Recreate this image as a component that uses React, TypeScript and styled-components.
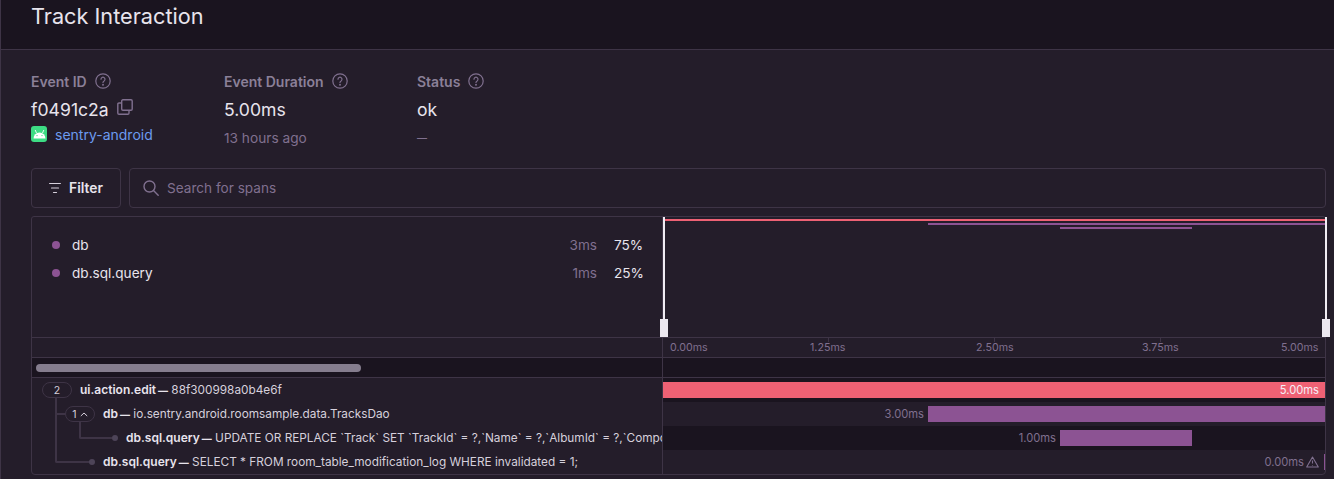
import React from "react";
import styled, { createGlobalStyle } from "styled-components";

const Global = createGlobalStyle`
  html, body { margin: 0; padding: 0; background: #241d2a; }
  body { font-family: Inter, "Liberation Sans", sans-serif; color: #e8e4ed; }
  * { box-sizing: border-box; }
`;
const Page = styled.div`
  width: 1334px; height: 479px; overflow: hidden; background: #241d2a;
  border-left: 1px solid #3e3446;
`;
const Header = styled.header`
  height: 50px; background: #1a141f; border-bottom: 1px solid #3e3446;
  padding: 3px 0 0 30px;
`;
const Title = styled.h1`
  margin: 0; font-size: 21.7px; line-height: 26px; font-weight: 400; color: #e8e4ed;
`;
const Body = styled.main`
  padding: 0 8px 0 30px;
`;
const Meta = styled.section`
  display: flex; height: 118px; padding-top: 22px;
`;
const MetaCol = styled.div<{ $w: number }>`
  width: ${(p) => p.$w}px; display: flex; flex-direction: column;
`;
const MetaLabel = styled.div`
  display: flex; align-items: center; gap: 8px; height: 18px;
  font-size: 14px; font-weight: 600; color: #8b8098;
`;
const MetaValue = styled.div`
  display: flex; align-items: center; gap: 8px; height: 24px; margin-top: 7px;
  font-size: 17.6px; color: #e8e4ed;
`;
const CopyWrap = styled.span`
  display: inline-flex; margin-bottom: 4px;
`;
const MetaSub = styled.div<{ $tight?: boolean }>`
  display: flex; align-items: center; gap: 8px; height: 20px; margin-top: ${(p) => (p.$tight ? 3 : 7)}px;
  font-size: 13.7px; color: #80708f;
`;
const ProjectLink = styled.a`
  color: #6c9bf0; font-size: 14px;
`;
const Badge = styled.span`
  width: 16px; height: 16px; border-radius: 3px; background: #3ddc84;
  display: inline-flex; align-items: center; justify-content: center;
`;
const SmallDash = styled.span`
  font-size: 10px; font-weight: 600;
`;
const Toolbar = styled.section`
  display: flex; gap: 8px; height: 40px;
`;
const FilterButton = styled.button`
  width: 90px; height: 40px; background: transparent; border: 1px solid #3e3446; border-radius: 4px;
  display: flex; align-items: center; justify-content: center; gap: 8px;
  font: 600 13.8px/18px Inter, sans-serif; color: #e8e4ed; padding: 0 0 1px;
`;
const SearchBox = styled.div`
  flex: 1; height: 40px; border: 1px solid #3e3446; border-radius: 4px;
  display: flex; align-items: center; gap: 8px; padding-left: 13px;
  font-size: 13.6px; color: #80708f;
`;
const Panel = styled.section`
  margin-top: 8px; width: 1295px; height: 259px; border: 1px solid #3e3446; border-radius: 3px 3px 4px 4px;
  display: grid; grid-template-columns: 630px minmax(0, 1fr); grid-template-rows: 121px 20px 20px 1fr;
`;
const Ops = styled.div`
  padding: 14px 21px 0 20px; display: flex; flex-direction: column; border-bottom: 1px solid #3e3446;
`;
const OpRow = styled.div`
  display: flex; align-items: center; height: 28px; font-size: 13.6px;
`;
const Dot = styled.span`
  width: 8px; height: 8px; border-radius: 50%; background: #8c5393; margin-right: 12px;
`;
const OpName = styled.span`
  flex: 1; color: #e8e4ed;
`;
const OpTime = styled.span`
  color: #80708f; margin-right: 17px;
`;
const OpPct = styled.span`
  width: 27px; text-align: right; color: #e8e4ed; white-space: nowrap;
`;
const Minimap = styled.div`
  position: relative; border-left: 1px solid #3e3446; border-bottom: 1px solid #3e3446;
`;
const MiniBar = styled.div<{ $c: string }>`
  position: absolute; height: 2px; background: ${(p) => p.$c};
`;
const Handle = styled.div`
  position: absolute; top: 0; bottom: 0; width: 2px; background: #f0ecf3;
  &::after {
    content: ""; position: absolute; bottom: 0; left: -3px; width: 8px; height: 18px;
    background: #ece8f0;
  }
`;
const AxisSpacer = styled.div`
  border-bottom: 1px solid #3e3446;
`;
const Axis = styled.div`
  border-left: 1px solid #3e3446; border-bottom: 1px solid #3e3446;
  display: grid; grid-template-columns: 140px 166px 166px 139px auto; padding: 0 0 1px 7px; align-items: center;
  font-size: 10.7px; color: #80708f; position: relative;
`;
const Tick = styled.span<{ $x: number }>`
  position: absolute; top: 0; left: ${(p) => p.$x}px; width: 1px; height: 4px; background: #3e3446;
`;
const ScrollCell = styled.div`
  background: #1a141f; border-bottom: 1px solid #3e3446; padding: 6px 0 0 4px;
`;
const ScrollThumb = styled.div`
  width: 325px; height: 8px; border-radius: 4px; background: #857d8e;
`;
const ScrollRight = styled.div`
  background: #1a141f; border-left: 1px solid #3e3446; border-bottom: 1px solid #3e3446;
`;
const Tree = styled.div`
  position: relative; display: flex; flex-direction: column;
`;
const TreeRow = styled.div<{ $indent: number }>`
  height: 24px; display: flex; align-items: center; padding: 0 0 1px ${(p) => p.$indent}px;
  font-size: 11.8px; white-space: pre; overflow: hidden; color: #d6d0dc;
`;
const OpStrong = styled.b`
  font-size: 12px; font-weight: 600; color: #e8e4ed;
`;
const TreeDash = styled.span`
  font-size: 10px; font-weight: 800; margin-left: 2px;
`;
const Pill = styled.span`
  position: absolute; height: 16px; border: 1px solid #3e3446; border-radius: 8px; background: #241d2a;
  display: flex; align-items: center; justify-content: center; gap: 3px; font-size: 10.5px; color: #d6d0dc;
`;
const Connector = styled.span`
  position: absolute; border-left: 2px solid #3e3446; border-bottom: 2px solid #3e3446; border-bottom-left-radius: 2px;
`;
const ConnectorDot = styled.span`
  position: absolute; width: 6px; height: 6px; border-radius: 50%; background: #4d4458;
`;
const Timeline = styled.div`
  border-left: 1px solid #3e3446; display: flex; flex-direction: column;
`;
const Lane = styled.div<{ $dark?: boolean }>`
  position: relative; height: 24px;
  background: ${(p) => (p.$dark ? "#1a141f" : "transparent")};
`;
const Bar = styled.div<{ $c: string }>`
  position: absolute; top: 4px; height: 16px; background: ${(p) => p.$c};
`;
const DurationInside = styled.span`
  position: absolute; right: 6px; top: 4px; line-height: 16px; font-size: 11.2px; color: #f4eff7;
`;
const Duration = styled.span`
  position: absolute; top: 4px; line-height: 16px; font-size: 11.2px; color: #80708f;
`;
const ZeroWrap = styled.span`
  position: absolute; right: 6px; top: 4px; display: flex; align-items: center; gap: 2px;
  line-height: 16px; font-size: 11.2px; color: #80708f;
`;
const Sliver = styled.span`
  position: absolute; right: 0; top: 4px; width: 1px; height: 16px; background: #8c5393;
`;

const Help = () => (
  <svg width="16" height="16" viewBox="0 0 16 16" fill="none" stroke="#80708f" strokeWidth="1.2">
    <circle cx="8" cy="8" r="7.200" />
    <path d="M6 6.200a2 2 0 1 1 3.100 1.700c-.7.400-1.100.8-1.100 1.600" strokeLinecap="round" />
    <circle cx="8" cy="11.700" r=".4" fill="#80708f" />
  </svg>
);
const Copy = () => (
  <svg width="16" height="16" viewBox="0 0 16 16" fill="none" stroke="#80708f" strokeWidth="1.4">
    <rect x="4.700" y="0.800" width="10.500" height="10.500" rx="1.200" />
    <path d="M4.700 4H2a1.200 1.200 0 0 0-1.200 1.200V14A1.200 1.200 0 0 0 2 15.200h8.800A1.200 1.200 0 0 0 12 14v-2.700" />
  </svg>
);
const Android = () => (
  <svg width="13" height="10" viewBox="0 0 13 10" fill="#fff">
    <path d="M0.500 9.500a6 6 0 0 1 12 0z" />
    <path d="M3.500 4 2.200 1M9.500 4l1.300-3" stroke="#fff" strokeWidth=".9" />
    <circle cx="4" cy="6.600" r=".7" fill="#3ddc84" />
    <circle cx="9" cy="6.600" r=".7" fill="#3ddc84" />
  </svg>
);
const FilterIcon = () => (
  <svg width="12" height="12" viewBox="0 0 12 12" fill="none" stroke="#d6d0dc" strokeWidth="1.2" strokeLinecap="round">
    <path d="M.6 1.500h10.800M2.500 6h7M4.500 10.500h3" />
  </svg>
);
const SearchIcon = () => (
  <svg width="16" height="16" viewBox="0 0 16 16" fill="none" stroke="#80708f" strokeWidth="1.4" strokeLinecap="round">
    <circle cx="6.500" cy="6.500" r="5.500" />
    <path d="m10.500 10.500 4.700 4.700" />
  </svg>
);
const Chevron = () => (
  <svg width="8" height="5" viewBox="0 0 8 5" fill="none" stroke="#d6d0dc" strokeWidth="1">
    <path d="M.8 4 4 1l3.200 3" />
  </svg>
);
const Warn = () => (
  <svg width="13" height="12" viewBox="0 0 13 12" fill="none" stroke="#80708f" strokeWidth="1.100" strokeLinejoin="round">
    <path d="M6.500 1 12.300 11H.7z" />
    <path d="M6.500 4.500v3M6.500 9v.4" />
  </svg>
);

export default function App() {
  return (
    <Page>
      <Global />
      <Header>
        <Title>Track Interaction</Title>
      </Header>
      <Body>
        <Meta>
          <MetaCol $w={193}>
            <MetaLabel>Event ID <Help /></MetaLabel>
            <MetaValue>f0491c2a <CopyWrap><Copy /></CopyWrap></MetaValue>
            <MetaSub $tight>
              <Badge><Android /></Badge>
              <ProjectLink>sentry-android</ProjectLink>
            </MetaSub>
          </MetaCol>
          <MetaCol $w={193}>
            <MetaLabel>Event Duration <Help /></MetaLabel>
            <MetaValue>5.00ms</MetaValue>
            <MetaSub>13 hours ago</MetaSub>
          </MetaCol>
          <MetaCol $w={193}>
            <MetaLabel>Status <Help /></MetaLabel>
            <MetaValue>ok</MetaValue>
            <MetaSub><SmallDash>—</SmallDash></MetaSub>
          </MetaCol>
        </Meta>
        <Toolbar>
          <FilterButton><FilterIcon /> Filter</FilterButton>
          <SearchBox><SearchIcon /> Search for spans</SearchBox>
        </Toolbar>
        <Panel>
          <Ops>
            <OpRow><Dot /><OpName>db</OpName><OpTime>3ms</OpTime><OpPct>75%</OpPct></OpRow>
            <OpRow><Dot /><OpName>db.sql.query</OpName><OpTime>1ms</OpTime><OpPct>25%</OpPct></OpRow>
          </Ops>
          <Minimap>
            <MiniBar $c="#ee6174" style={{ left: 1, right: -1, top: 2 }} />
            <MiniBar $c="#8c5393" style={{ left: 265, right: -1, top: 6 }} />
            <MiniBar $c="#8c5393" style={{ left: 397, width: 132, top: 10 }} />
            <Handle style={{ left: 0 }} />
            <Handle style={{ right: -2 }} />
          </Minimap>
          <AxisSpacer />
          <Axis>
            <Tick $x={165} /><Tick $x={331} /><Tick $x={497} />
            <span>0.00ms</span><span>1.25ms</span><span>2.50ms</span><span>3.75ms</span><span>5.00ms</span>
          </Axis>
          <ScrollCell><ScrollThumb /></ScrollCell>
          <ScrollRight />
          <Tree>
            <TreeRow $indent={48}><OpStrong>ui.action.edit<TreeDash>—</TreeDash></OpStrong> 88f300998a0b4e6f</TreeRow>
            <TreeRow $indent={71}><OpStrong>db<TreeDash>—</TreeDash></OpStrong> io.sentry.android.roomsample.data.TracksDao</TreeRow>
            <TreeRow $indent={94}><OpStrong>db.sql.query<TreeDash>—</TreeDash></OpStrong> UPDATE OR REPLACE `Track` SET `TrackId` = ?,`Name` = ?,`AlbumId` = ?,`Composer` = ?</TreeRow>
            <TreeRow $indent={71}><OpStrong>db.sql.query<TreeDash>—</TreeDash></OpStrong> SELECT * FROM room_table_modification_log WHERE invalidated = 1;</TreeRow>
            <Connector style={{ left: 23, top: 19, width: 36, height: 66 }} />
            <Connector style={{ left: 23, top: 20, width: 11, height: 17 }} />
            <Connector style={{ left: 47, top: 43, width: 33, height: 18 }} />
            <ConnectorDot style={{ left: 80, top: 57 }} />
            <ConnectorDot style={{ left: 57, top: 81 }} />
            <Pill style={{ left: 10, top: 4, width: 30 }}>2</Pill>
            <Pill style={{ left: 33, top: 28, width: 30 }}>1<Chevron /></Pill>
          </Tree>
          <Timeline>
            <Lane $dark>
              <Bar $c="#ee6174" style={{ left: 0, right: 0 }} />
              <DurationInside>5.00ms</DurationInside>
            </Lane>
            <Lane>
              <Bar $c="#8c5393" style={{ left: 265, right: 0 }} />
              <Duration style={{ right: 401 }}>3.00ms</Duration>
            </Lane>
            <Lane $dark>
              <Bar $c="#8c5393" style={{ left: 397, width: 132 }} />
              <Duration style={{ right: 269 }}>1.00ms</Duration>
            </Lane>
            <Lane>
              <ZeroWrap>0.00ms <Warn /></ZeroWrap>
              <Sliver />
            </Lane>
          </Timeline>
        </Panel>
      </Body>
    </Page>
  );
}
